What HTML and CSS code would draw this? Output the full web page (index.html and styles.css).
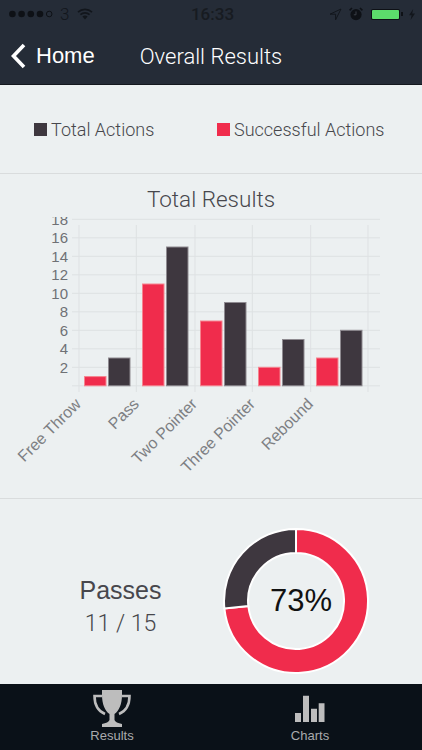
FILE: index.html
```html
<!DOCTYPE html>
<html lang="en">

<head>
    <meta charset="utf-8">
    <title>Overall Results</title>
    <link rel="stylesheet" href="styles.css">
</head>

<body>
<div id="app">
    <div class="header">
        <div class="status-bar">
            <div class="status-left">
                <svg class="signal" width="46" height="8" viewBox="0 0 46 8">
                    <circle cx="3.4" cy="4" r="3.3"/>
                    <circle cx="12.6" cy="4" r="3.3"/>
                    <circle cx="21.8" cy="4" r="3.3"/>
                    <circle cx="31" cy="4" r="3.3"/>
                    <circle class="signal-empty" cx="40.2" cy="4" r="2.8"/>
                </svg>
                <span class="carrier">3</span>
                <svg class="wifi" width="16" height="12" viewBox="0 0 16 12">
                    <path d="M1 4.2C5 .4 11 .4 15 4.2M3.4 6.6C6 4.2 10 4.2 12.6 6.6" fill="none" stroke="#12161c" stroke-width="1.7"/>
                    <path d="M5.4 8.4C6.8 7.2 9.2 7.2 10.6 8.4L8 11.4Z" fill="#12161c"/>
                </svg>
            </div>
            <div class="status-time">16:33</div>
            <div class="status-right">
                <svg width="13" height="13" viewBox="0 0 13 13">
                    <path d="M12 1L1 6.2H6.6V11.8Z" fill="none" stroke="#12161c" stroke-width="1"/>
                </svg>
                <svg class="alarm" width="14" height="14" viewBox="0 0 14 14">
                    <circle cx="7" cy="7.6" r="5.6" fill="#0e1116"/>
                    <path d="M7 4.4V7.8H4.8" fill="none" stroke="#3a3f46" stroke-width="1"/>
                    <path d="M.6 3.4L3 1M13.4 3.4L11 1" stroke="#0e1116" stroke-width="1.6"/>
                </svg>
                <div class="battery"><div class="battery-level"></div></div>
                <div class="battery-tip"></div>
                <svg class="bolt" width="6" height="11" viewBox="0 0 6 11">
                    <path d="M4.2 0L0 6.2H2.6L1.6 11L6 4.6H3.2Z" fill="#12161c"/>
                </svg>
            </div>
        </div>
        <div class="nav-bar">
            <svg class="back-icon" width="17" height="26" viewBox="0 0 17 26">
                <path d="M14 2L3.5 13L14 24" fill="none" stroke="#fff" stroke-width="3.6"/>
            </svg>
            <div class="back-label">Home</div>
            <div class="nav-title">Overall Results</div>
        </div>
    </div>

    <div class="legend">
        <div class="legend-item legend-total"><span class="swatch swatch-dark"></span>Total Actions</div>
        <div class="legend-item"><span class="swatch swatch-red"></span>Successful Actions</div>
    </div>

    <div class="chart-section">
        <div class="chart-title">Total Results</div>
        <!-- coordinates below are page pixels, so the viewBox starts at y 217 and cuts the top label -->
        <svg class="chart" width="422" height="270" viewBox="0 217 422 270">
            <g class="grid">
                <path d="M72 219.300H380M72 237.800H380M72 256.300H380M72 274.800H380M72 293.300H380M72 311.800H380M72 330.300H380M72 348.800H380M72 367.300H380M72 385.800H380"/>
                <path d="M79 225V392M136.300 225V392M195 225V392M252.300 225V392M310.700 225V392M368 225V392"/>
            </g>
            <g class="y-labels">
                <text x="68" y="224.500">18</text>
                <text x="68" y="243">16</text>
                <text x="68" y="261.500">14</text>
                <text x="68" y="280">12</text>
                <text x="68" y="298.500">10</text>
                <text x="68" y="317">8</text>
                <text x="68" y="335.500">6</text>
                <text x="68" y="354">4</text>
                <text x="68" y="372.500">2</text>
            </g>
            <g class="bars-red">
                <rect x="84.500" y="376.600" width="21.500" height="9.200"/>
                <rect x="142.500" y="284" width="21.500" height="101.800"/>
                <rect x="200.500" y="321" width="21.500" height="64.800"/>
                <rect x="258.500" y="367.300" width="21.500" height="18.500"/>
                <rect x="316.500" y="358" width="21.500" height="27.800"/>
            </g>
            <g class="bars-dark">
                <rect x="108.500" y="358" width="21.500" height="27.800"/>
                <rect x="166.500" y="247" width="21.500" height="138.800"/>
                <rect x="224.500" y="302.500" width="21.500" height="83.300"/>
                <rect x="282.500" y="339.500" width="21.500" height="46.300"/>
                <rect x="340.500" y="330.300" width="21.500" height="55.500"/>
            </g>
            <g class="x-labels">
                <text transform="translate(82 405) rotate(-45)">Free Throw</text>
                <text transform="translate(140 405) rotate(-45)">Pass</text>
                <text transform="translate(198 405) rotate(-45)">Two Pointer</text>
                <text transform="translate(256 405) rotate(-45)">Three Pointer</text>
                <text transform="translate(314 405) rotate(-45)">Rebound</text>
            </g>
        </svg>
    </div>

    <div class="summary">
        <div class="summary-text">
            <div class="summary-name">Passes</div>
            <div class="summary-count">11 / 15</div>
        </div>
        <div class="donut">
            <svg width="150" height="150" viewBox="0 0 150 150">
                <path class="donut-red" d="M75 3A72 72 0 1 1 3.400 82.500L27.300 80A48 48 0 1 0 75 27Z"/>
                <path class="donut-dark" d="M3.400 82.500A72 72 0 0 1 75 3L75 27A48 48 0 0 0 27.300 80Z"/>
            </svg>
            <div class="donut-label">73%</div>
        </div>
    </div>

    <div class="tab-bar">
        <div class="tab">
            <svg class="tab-icon" width="40" height="38" viewBox="0 0 40 38">
                <path d="M10 0H30V5C30 14 27 21 22.500 24V30C23 32 26 33 30 34V37H10V34C14 33 17 32 17.500 30V24C13 21 10 14 10 5Z" fill="#bdbdbd"/>
                <path d="M10 6H2.500C2.500 14 6 21 13 24M30 6H37.500C37.500 14 34 21 27 24" fill="none" stroke="#bdbdbd" stroke-width="2.600"/>
            </svg>
            <div class="tab-label">Results</div>
        </div>
        <div class="tab">
            <svg class="tab-icon" width="40" height="38" viewBox="0 0 40 38">
                <path d="M5 23H11V32H5ZM13 5.700H19V32H13ZM21 18.700H27V32H21ZM28.700 13.300H34.500V32H28.700Z" fill="#bdbdbd"/>
            </svg>
            <div class="tab-label">Charts</div>
        </div>
    </div>
</div>
</body>

</html>
```
FILE: styles.css
```css
body {
    margin: 0;
}

#app {
    width: 422px;
    height: 750px;
    display: flex;
    flex-direction: column;
    overflow: hidden;
    background: #ecf0f1;
    font-family: Roboto, "Liberation Sans", sans-serif;
    font-weight: 300;
    color: #47474c;
}

.header {
    height: 84px;
    background: #252c37;
    border-bottom: 1px solid #14181e;
}

.status-bar {
    height: 28px;
    padding: 0 7px 0 9px;
    display: flex;
    align-items: center;
    justify-content: space-between;
    color: #12161c;
}

.status-left {
    width: 130px;
    display: flex;
    align-items: center;
}

.signal circle {
    fill: #0e1116;
}

.signal .signal-empty {
    fill: none;
    stroke: #0e1116;
    stroke-width: 1;
}

.carrier {
    margin-left: 5px;
    font-size: 17px;
    font-weight: 300;
}

.wifi {
    margin-left: 8px;
}

.status-time {
    margin-right: 43px;
    font-size: 17px;
    font-weight: 500;
    color: #171b21;
}

.status-right {
    display: flex;
    align-items: center;
}

.alarm {
    margin-left: 7px;
}

.battery {
    margin-left: 8px;
    width: 29px;
    height: 11px;
    box-sizing: border-box;
    padding: 1px;
    background: #0e1116;
    border-radius: 2px;
}

.battery-level {
    height: 100%;
    background: #5cdc6b;
    border-radius: 1px;
}

.battery-tip {
    width: 2px;
    height: 4px;
    margin-left: 1px;
    background: #0e1116;
}

.bolt {
    margin-left: 6px;
}

.nav-bar {
    height: 56px;
    padding-left: 10px;
    display: flex;
    align-items: center;
    color: #fff;
}

.back-label {
    margin-left: 9px;
    font-family: "Liberation Sans", sans-serif;
    font-size: 22px;
    font-weight: 400;
}

.nav-title {
    margin-left: 45px;
    font-size: 22px;
}

.legend {
    height: 88px;
    padding-left: 34px;
    display: flex;
    align-items: center;
    border-bottom: 1px solid #d9dcdd;
}

.legend-item {
    display: flex;
    align-items: center;
    font-size: 18px;
}

.legend-total {
    width: 183px;
}

.swatch {
    width: 13px;
    height: 13px;
    margin-right: 4px;
}

.swatch-dark {
    background: #3e373f;
}

.swatch-red {
    background: #f02c4c;
}

.chart-section {
    height: 324px;
    border-bottom: 1px solid #d9dcdd;
}

.chart-title {
    padding-top: 12px;
    height: 31px;
    line-height: 27px;
    text-align: center;
    font-size: 22.5px;
}

.chart {
    display: block;
}

.grid path {
    fill: none;
    stroke: #dee1e3;
    stroke-width: 1;
}

.y-labels text {
    text-anchor: end;
    font-family: "Liberation Sans", sans-serif;
    font-size: 15px;
    fill: #6f7175;
}

.x-labels text {
    text-anchor: end;
    font-family: "Liberation Sans", sans-serif;
    font-size: 16px;
    fill: #7d7f83;
}

.bars-red rect {
    fill: #f02c4c;
    stroke: #f6848f;
    stroke-width: 1;
}

.bars-dark rect {
    fill: #3e373f;
    stroke: #8e8a90;
    stroke-width: 1;
}

.summary {
    flex: 1;
    padding: 27px 0 0 20px;
    display: flex;
    align-items: flex-start;
}

.summary-text {
    width: 201px;
    padding-top: 48px;
    text-align: center;
}

.summary-name {
    font-family: "Liberation Sans", sans-serif;
    font-size: 25px;
    font-weight: 400;
    line-height: 32px;
    color: #47474c;
}

.summary-count {
    margin-top: 2px;
    font-size: 23px;
    line-height: 32px;
}

.donut {
    position: relative;
    width: 150px;
    height: 150px;
}

.donut svg {
    display: block;
}

.donut-red {
    fill: #f02c4c;
    stroke: #fff;
    stroke-width: 2;
}

.donut-dark {
    fill: #3e373f;
    stroke: #fff;
    stroke-width: 2;
}

.donut-label {
    position: absolute;
    inset: 0 0 0 10px;
    display: flex;
    align-items: center;
    justify-content: center;
    font-family: "Liberation Sans", sans-serif;
    font-size: 31px;
    font-weight: 400;
    color: #111;
}

.tab-bar {
    height: 66px;
    display: flex;
    background: #0a1118;
    color: #a9abad;
}

.tab {
    padding-top: 6px;
    display: flex;
    flex-direction: column;
    align-items: center;
}

.tab:first-child {
    margin-left: 92px;
    width: 40px;
}

.tab:last-child {
    margin-left: 158px;
    width: 40px;
}

.tab-icon {
    display: block;
    flex: none;
}

.tab-label {
    white-space: nowrap;
    font-family: "Liberation Sans", sans-serif;
    font-size: 13px;
    font-weight: 400;
    line-height: 16px;
}
```
